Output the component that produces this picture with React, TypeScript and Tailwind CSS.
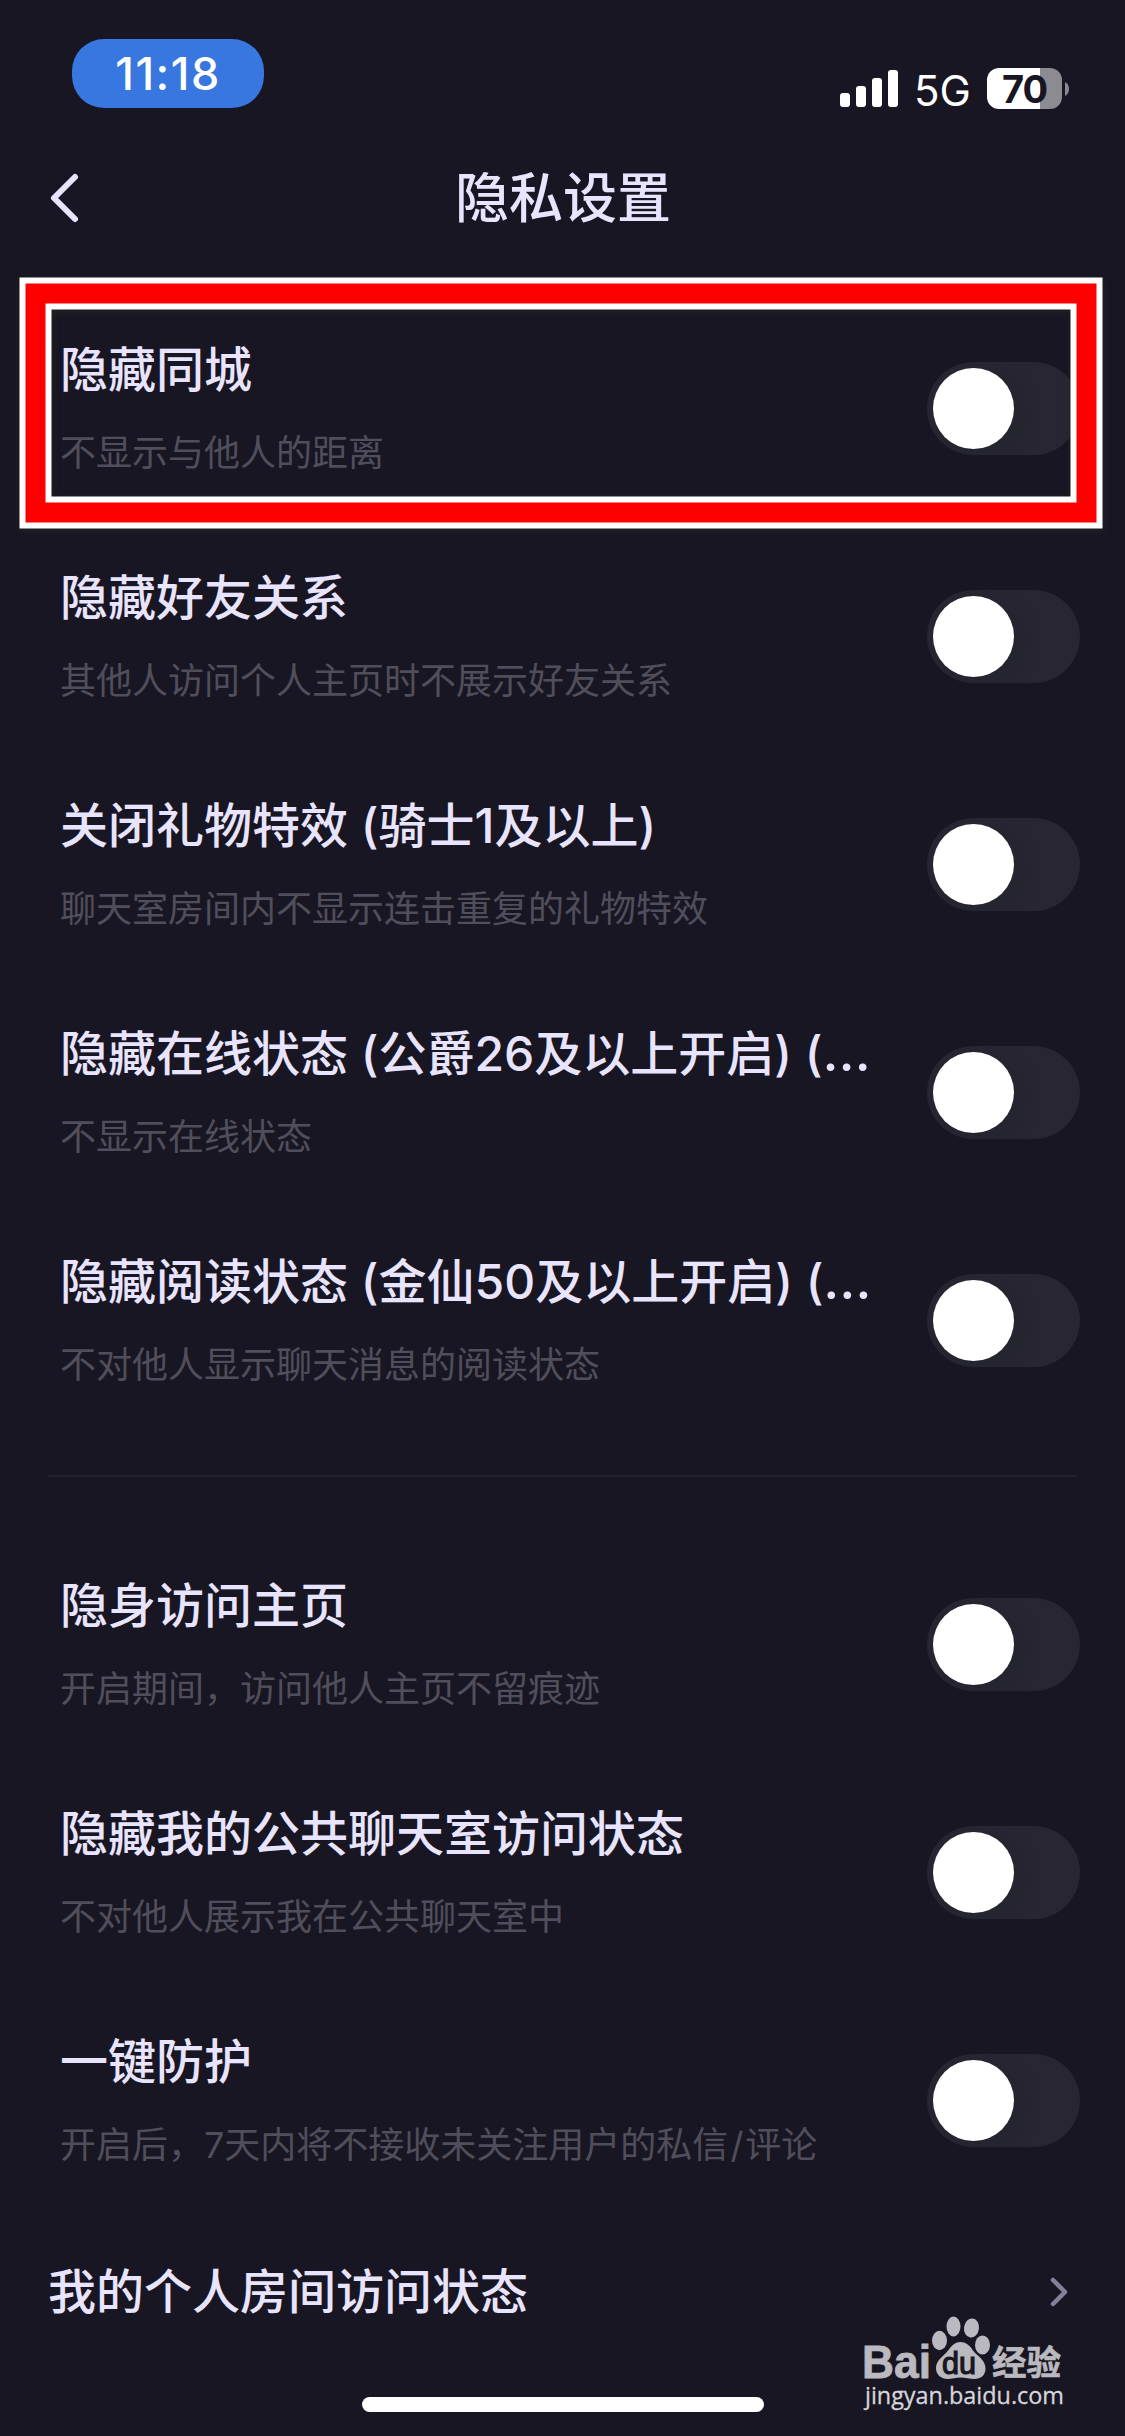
import { useState } from 'react';
import type { ReactNode } from 'react';

interface Setting {
  id: string;
  title: ReactNode;
  desc: ReactNode;
}

const dots = <span className="text-[53px] leading-none">…</span>;

const visibilitySettings: Setting[] = [
  { id: 'city', title: '隐藏同城', desc: '不显示与他人的距离' },
  { id: 'friends', title: '隐藏好友关系', desc: '其他人访问个人主页时不展示好友关系' },
  { id: 'gift', title: '关闭礼物特效 (骑士1及以上)', desc: '聊天室房间内不显示连击重复的礼物特效' },
  { id: 'online', title: <>隐藏在线状态 (公爵26及以上开启) ({dots}</>, desc: '不显示在线状态' },
  { id: 'read', title: <>隐藏阅读状态 (金仙50及以上开启) ({dots}</>, desc: '不对他人显示聊天消息的阅读状态' },
];

const visitSettings: Setting[] = [
  { id: 'stealth', title: '隐身访问主页', desc: '开启期间，访问他人主页不留痕迹' },
  { id: 'room', title: '隐藏我的公共聊天室访问状态', desc: '不对他人展示我在公共聊天室中' },
  { id: 'guard', title: '一键防护', desc: <>开启后，7天内将不接收未关注用户的私信<span className="mx-[2px]">/</span>评论</> },
];

function StatusBar() {
  return (
    <div className="h-[144px] flex items-start justify-between pl-[72px] pr-[56px] text-white">
      <div className="mt-[39px] w-[192px] h-[69px] rounded-[32px] bg-[#3777df] flex items-center justify-center text-[45px] font-medium leading-none tracking-[1.5px]">
        <span>11:18</span>
      </div>
      <div className="mt-[68px] flex items-start">
        <svg width="58" height="41" viewBox="0 0 58 41" fill="#fff">
          <rect x="0" y="25" width="10" height="14" rx="3" />
          <rect x="16" y="18" width="10" height="21" rx="3" />
          <rect x="32" y="10" width="10" height="29" rx="3" />
          <rect x="48" y="2" width="10" height="37" rx="3" />
        </svg>
        <span className="ml-[16px] w-[55px] text-[42px] leading-[46px]">5G</span>
        <div className="ml-[18px] flex items-center">
          <div className="w-[75px] h-[41px] rounded-[12px] bg-[linear-gradient(90deg,#fff_53px,#8c8b92_53px)] flex items-center justify-center text-[38px] font-bold leading-none tracking-[-1px] text-[#181622]">
            <span>70</span>
          </div>
          <svg className="ml-[3px]" width="4" height="14" viewBox="0 0 4 14" fill="#8c8b92">
            <path d="M0 0C2.5 1.2 4 4 4 7s-1.500 5.800-4 7z" />
          </svg>
        </div>
      </div>
    </div>
  );
}

function Toggle({ on, onChange }: { on: boolean; onChange: () => void }) {
  return (
    <button
      role="switch"
      aria-checked={on}
      onClick={onChange}
      className={`w-[153px] h-[93px] shrink-0 rounded-full p-[6px] flex overflow-hidden ${on ? 'justify-end bg-[#6b5cff]' : 'justify-start bg-[#272632]'}`}
    >
      <span className="size-[81px] rounded-full bg-white shadow-[6px_6px_18px_rgba(32,36,40,0.35)]" />
    </button>
  );
}

function SettingRow({ item, on, onChange }: { item: Setting; on: boolean; onChange: () => void }) {
  return (
    <div className="h-[228px] pl-[60px] pr-[45px] flex items-center justify-between">
      <div className="w-[820px] pb-[2px] flex flex-col">
        <span className="h-[72px] text-[48px] leading-[72px] font-medium text-[#e9e4fd] whitespace-nowrap">{item.title}</span>
        <span className="mt-[20px] text-[36px] leading-[54px] text-[#514e5c] whitespace-nowrap">{item.desc}</span>
      </div>
      <Toggle on={on} onChange={onChange} />
    </div>
  );
}

// red marker with white edges over the first row
function Marker() {
  return (
    <svg className="absolute left-0 top-[264px] pointer-events-none drop-shadow-[1px_2px_3px_rgba(34,38,36,0.9)]" width="1125" height="280" fill="none">
      <rect x="35.500" y="29.500" width="1051" height="219" stroke="#fff" strokeWidth="32" />
      <rect x="35.500" y="29.500" width="1051" height="219" stroke="#f00" strokeWidth="20" />
    </svg>
  );
}

function Watermark() {
  return (
    <div className="absolute left-[862px] top-[2314px] w-[206px] h-[104px] text-[#bab9bf]">
      <svg className="overflow-visible" width="206" height="70" viewBox="0 0 206 70" fill="currentColor">
        <text x="0" y="63.500" fontSize="46" fontWeight="700" fontFamily="Liberation Sans" textLength="69" lengthAdjust="spacingAndGlyphs" stroke="currentColor" strokeWidth="0.800">Bai</text>
        <ellipse cx="77.500" cy="26.500" rx="7.500" ry="9.700" />
        <ellipse cx="91.500" cy="12.500" rx="7" ry="10" />
        <ellipse cx="109.500" cy="14" rx="7.500" ry="9.500" transform="rotate(8 109.500 14)" />
        <ellipse cx="120.500" cy="31" rx="7.500" ry="9.500" />
        <path d="M98.500 28c5 0 9 3 12.500 8.500 3 4.500 12.500 9 12.500 18 0 7-5 10.500-11 10.500-5 0-9-1.500-14-1.500s-8 1.500-13 1.500c-6 0-11.500-4-11.500-11 0-8 8-12 12.500-18 3.500-5 7-8 12-8z" />
        <text x="80" y="60" fontSize="31" fontFamily="Liberation Sans" fill="#181622" stroke="#181622" strokeWidth="1.200" textLength="34" lengthAdjust="spacingAndGlyphs">du</text>
        <text x="130" y="61" fontSize="34" fontWeight="700" fontFamily="Noto Sans CJK SC" textLength="69" lengthAdjust="spacingAndGlyphs" stroke="currentColor" strokeWidth="0.600">经验</text>
      </svg>
      <svg className="block overflow-visible" width="206" height="34" viewBox="0 0 206 34">
        <text x="3" y="20" fontSize="24" fontFamily="Open Sans" fill="#d6d5d9" stroke="#d6d5d9" strokeWidth="0.300" textLength="199" lengthAdjust="spacingAndGlyphs">jingyan.baidu.com</text>
      </svg>
    </div>
  );
}

export default function App() {
  const [enabled, setEnabled] = useState<Record<string, boolean>>({});

  const toggle = (id: string) => setEnabled((prev) => ({ ...prev, [id]: !prev[id] }));

  const renderRow = (item: Setting) => (
    <SettingRow key={item.id} item={item} on={!!enabled[item.id]} onChange={() => toggle(item.id)} />
  );

  return (
    <div className="relative w-[1125px] h-[2436px] overflow-hidden bg-[#181622] flex flex-col font-[Inter,'Noto_Sans_CJK_SC',sans-serif]">
      <StatusBar />
      <header className="h-[108px] flex items-center px-[48px]">
        <svg className="shrink-0" width="34" height="54" viewBox="0 0 34 54" fill="none" stroke="#e9e4fd" strokeWidth="6" strokeLinecap="round" strokeLinejoin="round">
          <path d="M27 6L6 27l21 21" />
        </svg>
        <h1 className="flex-1 pt-[2px] pr-[33px] text-center text-[54px] leading-[80px] font-medium text-[#e9e4fd]">隐私设置</h1>
      </header>
      <main className="pt-[42px] flex flex-col">
        {visibilitySettings.map(renderRow)}
        <div className="h-[96px] px-[48px] pt-[41px]">
          <div className="h-[2px] bg-[#22212d]" />
        </div>
        {visitSettings.map(renderRow)}
        <div className="h-[156px] pl-[48px] pr-[54px] flex items-center justify-between">
          <span className="text-[48px] leading-[72px] font-medium text-[#e9e4fd]">我的个人房间访问状态</span>
          <svg width="24" height="36" viewBox="0 0 24 36" fill="none" stroke="#85809a" strokeWidth="4.500" strokeLinecap="round" strokeLinejoin="round">
            <path d="M6 6l12 12L6 30" />
          </svg>
        </div>
      </main>
      <Marker />
      <div className="absolute left-[362px] top-[2397px] w-[402px] h-[15px] rounded-full bg-white" />
      <Watermark />
    </div>
  );
}
